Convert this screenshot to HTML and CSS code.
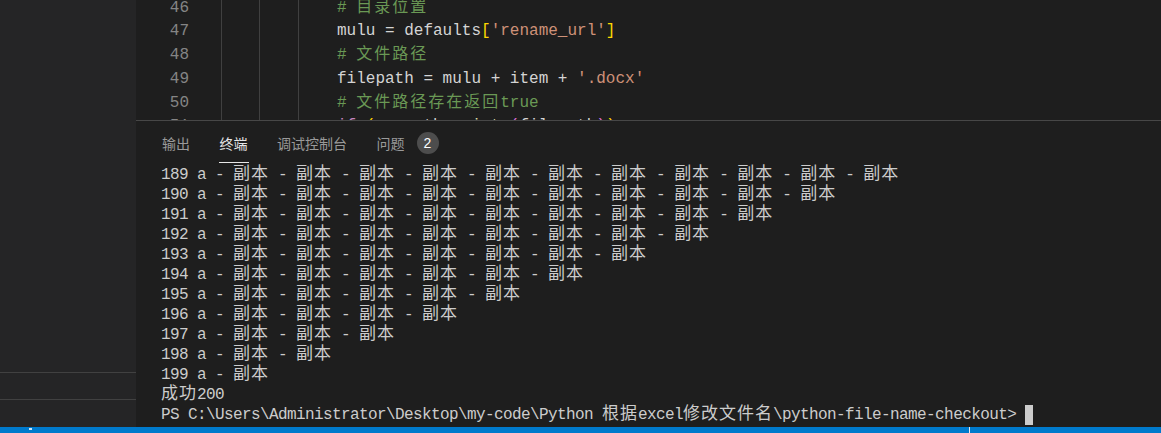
FILE: index.html
```html
<!DOCTYPE html>
<html lang="zh-CN">
<head>
<meta charset="utf-8">
<title>Terminal</title>
<link rel="stylesheet" href="styles.css">
</head>
<body>
<div class="app">
  <div class="main">
    <aside class="sidebar">
      <div class="side-fill"></div>
      <div class="side-section"></div>
      <div class="side-section last"></div>
    </aside>
    <div class="workbench">
      <div class="editor">
        <div class="gutter">
          <div class="ln">46</div>
          <div class="ln">47</div>
          <div class="ln">48</div>
          <div class="ln">49</div>
          <div class="ln">50</div>
          <div class="ln">51</div>
        </div>
        <div class="code">
          <div class="cl"><span class="cm"># <span class="w">目录位置</span></span></div>
          <div class="cl">mulu = defaults<span class="br1">[</span><span class="str">'rename_url'</span><span class="br1">]</span></div>
          <div class="cl"><span class="cm"># <span class="w">文件路径</span></span></div>
          <div class="cl">filepath = mulu + item + <span class="str">'.docx'</span></div>
          <div class="cl"><span class="cm"># <span class="w">文件路径存在返回</span>true</span></div>
          <div class="cl"><span class="kw">if</span> <span class="br1">(</span>os.path.<span class="fn">exists</span><span class="br2">(</span>filepath<span class="br2">)</span><span class="br1">)</span>:</div>
        </div>
      </div>
      <div class="panel">
        <div class="tabs">
          <div class="tab">输出</div>
          <div class="tab active">终端</div>
          <div class="tab">调试控制台</div>
          <div class="tab">问题<span class="badge">2</span></div>
        </div>
        <div class="terminal">
          <div class="tl">189 a - <span class="w">副本</span> - <span class="w">副本</span> - <span class="w">副本</span> - <span class="w">副本</span> - <span class="w">副本</span> - <span class="w">副本</span> - <span class="w">副本</span> - <span class="w">副本</span> - <span class="w">副本</span> - <span class="w">副本</span> - <span class="w">副本</span></div>
          <div class="tl">190 a - <span class="w">副本</span> - <span class="w">副本</span> - <span class="w">副本</span> - <span class="w">副本</span> - <span class="w">副本</span> - <span class="w">副本</span> - <span class="w">副本</span> - <span class="w">副本</span> - <span class="w">副本</span> - <span class="w">副本</span></div>
          <div class="tl">191 a - <span class="w">副本</span> - <span class="w">副本</span> - <span class="w">副本</span> - <span class="w">副本</span> - <span class="w">副本</span> - <span class="w">副本</span> - <span class="w">副本</span> - <span class="w">副本</span> - <span class="w">副本</span></div>
          <div class="tl">192 a - <span class="w">副本</span> - <span class="w">副本</span> - <span class="w">副本</span> - <span class="w">副本</span> - <span class="w">副本</span> - <span class="w">副本</span> - <span class="w">副本</span> - <span class="w">副本</span></div>
          <div class="tl">193 a - <span class="w">副本</span> - <span class="w">副本</span> - <span class="w">副本</span> - <span class="w">副本</span> - <span class="w">副本</span> - <span class="w">副本</span> - <span class="w">副本</span></div>
          <div class="tl">194 a - <span class="w">副本</span> - <span class="w">副本</span> - <span class="w">副本</span> - <span class="w">副本</span> - <span class="w">副本</span> - <span class="w">副本</span></div>
          <div class="tl">195 a - <span class="w">副本</span> - <span class="w">副本</span> - <span class="w">副本</span> - <span class="w">副本</span> - <span class="w">副本</span></div>
          <div class="tl">196 a - <span class="w">副本</span> - <span class="w">副本</span> - <span class="w">副本</span> - <span class="w">副本</span></div>
          <div class="tl">197 a - <span class="w">副本</span> - <span class="w">副本</span> - <span class="w">副本</span></div>
          <div class="tl">198 a - <span class="w">副本</span> - <span class="w">副本</span></div>
          <div class="tl">199 a - <span class="w">副本</span></div>
          <div class="tl"><span class="w">成功</span>200</div>
          <div class="tl">PS C:\Users\Administrator\Desktop\my-code\Python <span class="w">根据</span>excel<span class="w">修改文件名</span>\python-file-name-checkout> <span class="cursor"></span></div>
        </div>
      </div>
    </div>
  </div>
  <div class="statusbar">
    <span class="sb-mark"></span>
    <span class="sb-fill"></span>
    <span class="sb-line"></span>
    <span class="sb-end"></span>
  </div>
</div>
</body>
</html>
```

FILE: styles.css
```css
html, body {
  margin: 0;
  padding: 0;
  background: #1e1e1e;
  overflow: hidden;
}

.app {
  width: 1161px;
  height: 433px;
  display: flex;
  flex-direction: column;
}

.main {
  flex: 1;
  display: flex;
  min-height: 0;
}

.sidebar {
  width: 136px;
  background: #252526;
  display: flex;
  flex-direction: column;
}

.side-fill {
  flex: 1;
}

.side-section {
  height: 26px;
  border-top: 1px solid #414141;
}

.side-section.last {
  height: 27px;
}

.workbench {
  flex: 1;
  display: flex;
  flex-direction: column;
  min-width: 0;
}

.editor {
  height: 120px;
  overflow: hidden;
  display: flex;
  font-family: "Liberation Mono", monospace;
  font-size: 16px;
  line-height: 23.75px;
  color: #d4d4d4;
  background:
    linear-gradient(#404040, #404040) 85px 0 / 1px 100% no-repeat,
    linear-gradient(#404040, #404040) 123px 0 / 1px 100% no-repeat,
    linear-gradient(#404040, #404040) 162px 0 / 1px 100% no-repeat,
    #1e1e1e;
}

.gutter {
  width: 53px;
  margin-top: -3.3px;
  text-align: right;
  color: #858585;
}

.ln,
.cl {
  height: 23.75px;
  white-space: pre;
}

.code {
  margin-top: -3.3px;
  padding-left: 148px;
}

.w {
  font-family: "Noto Sans CJK SC", sans-serif;
  line-height: 0;
}

.code .w {
  font-size: 16px;
  letter-spacing: 2px;
}

.cm { color: #6a9955; }
.str { color: #ce9178; }
.br1 { color: #ffd700; }
.br2 { color: #da70d6; }
.kw { color: #c586c0; }
.fn { color: #dcdcaa; }

.panel {
  flex: 1;
  border-top: 1px solid #474747;
  display: flex;
  flex-direction: column;
  min-height: 0;
}

.tabs {
  display: flex;
  align-items: flex-start;
  gap: 27.5px;
  padding: 12px 0 0 25px;
  font-family: "Noto Sans CJK SC", sans-serif;
  font-size: 14px;
  line-height: 20px;
  color: #9a9a9a;
}

.tab {
  display: flex;
  align-items: center;
  gap: 12px;
  padding: 0 1px 9px;
  border-bottom: 1px solid transparent;
}

.tab.active {
  color: #e7e7e7;
  border-bottom-color: #e7e7e7;
}

.badge {
  width: 22px;
  height: 22px;
  margin: -1px 0;
  border-radius: 50%;
  background: #4d4d4d;
  color: #ffffff;
  font-family: "Liberation Sans", sans-serif;
  font-size: 14px;
  line-height: 22px;
  text-align: center;
}

.terminal {
  padding: 2px 0 0 25px;
  font-family: "Liberation Mono", monospace;
  font-size: 16px;
  letter-spacing: -0.6px;
  line-height: 20px;
  color: #cccccc;
}

.tl {
  height: 20px;
  white-space: pre;
}

.terminal .w {
  font-size: 17px;
  letter-spacing: 1px;
}

.cursor {
  display: inline-block;
  width: 8px;
  height: 20px;
  background: #cccccc;
  vertical-align: top;
}

.statusbar {
  height: 6px;
  background: #007acc;
  display: flex;
  align-items: flex-start;
  padding-left: 29px;
}

.sb-mark {
  width: 3px;
  height: 2px;
  margin-top: 1px;
  background: #d0e6f5;
}

.sb-fill {
  flex: 1;
}

.sb-line {
  width: 1px;
  height: 6px;
  background: #e9e9f0;
}

.sb-end {
  width: 191px;
}
```
